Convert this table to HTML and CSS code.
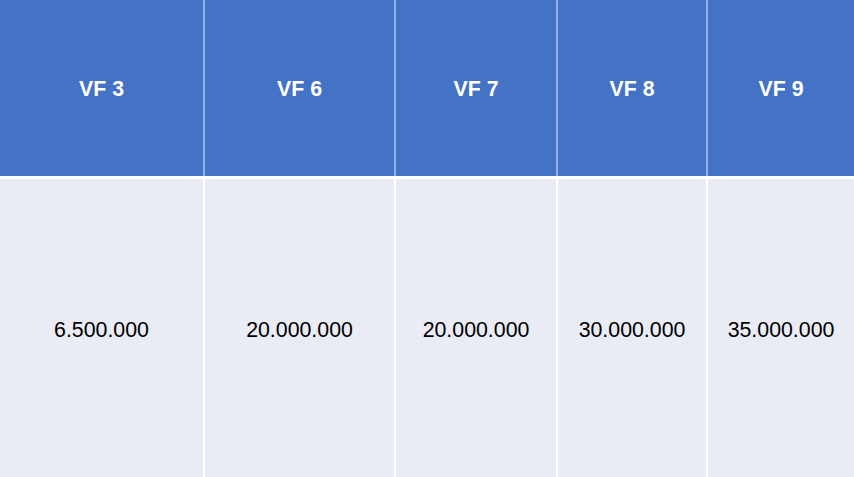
FILE: index.html
```html
<!DOCTYPE html>
<html>
<head>
<meta charset="utf-8">
<link rel="stylesheet" href="styles.css">
</head>
<body>
<div class="table">
  <div class="cell head first">VF 3</div>
  <div class="cell head">VF 6</div>
  <div class="cell head">VF 7</div>
  <div class="cell head">VF 8</div>
  <div class="cell head">VF 9</div>
  <div class="cell body first">6.500.000</div>
  <div class="cell body">20.000.000</div>
  <div class="cell body">20.000.000</div>
  <div class="cell body">30.000.000</div>
  <div class="cell body">35.000.000</div>
</div>
</body>
</html>
```
FILE: styles.css
```css
html, body {
  margin: 0;
  padding: 0;
  width: 854px;
  height: 477px;
  overflow: hidden;
  background: #ffffff;
}
.table {
  display: grid;
  grid-template-columns: 203px 191px 162px 150px 148px;
  grid-template-rows: 176px 298px;
  row-gap: 3px;
  width: 854px;
  height: 477px;
  font-family: "Liberation Sans", Arial, sans-serif;
  font-size: 21.33px;
}
.cell {
  display: flex;
  align-items: center;
  justify-content: center;
  box-sizing: border-box;
}
.head {
  background: #4472c4;
  color: #ffffff;
  font-weight: bold;
  border-left: 2px solid #8fb0ea;
  padding-top: 2px;
}
.body {
  background: #e9ebf5;
  color: #000000;
  border-left: 2px solid #ffffff;
  padding-top: 4px;
}
.cell.first {
  border-left: none;
}
```
